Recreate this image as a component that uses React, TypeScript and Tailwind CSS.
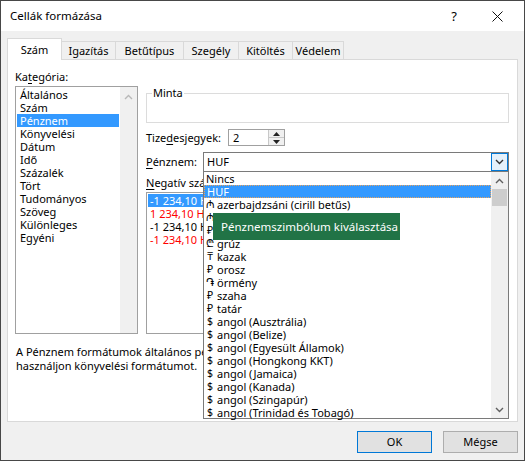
import type { ReactNode } from 'react'

const categories = [
  'Általános',
  'Szám',
  'Pénznem',
  'Könyvelési',
  'Dátum',
  'Idő',
  'Százalék',
  'Tört',
  'Tudományos',
  'Szöveg',
  'Különleges',
  'Egyéni',
]

const currencies: [string, string][] = [
  ['', 'Nincs'],
  ['', 'HUF'],
  ['₼', 'azerbajdzsáni (cirill betűs)'],
  ['₼', 'azerbajdzsáni (latin betűs)'],
  ['₽', 'belarusz'],
  ['₾', 'grúz'],
  ['₸', 'kazak'],
  ['₽', 'orosz'],
  ['֏', 'örmény'],
  ['₽', 'szaha'],
  ['₽', 'tatár'],
  ['$', 'angol (Ausztrália)'],
  ['$', 'angol (Belize)'],
  ['$', 'angol (Egyesült Államok)'],
  ['$', 'angol (Hongkong KKT)'],
  ['$', 'angol (Jamaica)'],
  ['$', 'angol (Kanada)'],
  ['$', 'angol (Szingapúr)'],
  ['$', 'angol (Trinidad és Tobagó)'],
]

const negatives = [
  { text: '-1 234,10 HUF', red: false },
  { text: '1 234,10 HUF', red: true },
  { text: '-1 234,10 HUF', red: false },
  { text: '-1 234,10 HUF', red: true },
]

const tabs = [
  { label: 'Szám', w: 'w-[55px]' },
  { label: 'Igazítás', w: 'w-[54px]' },
  { label: 'Betűtípus', w: 'w-[68px]' },
  { label: 'Szegély', w: 'w-[55px]' },
  { label: 'Kitöltés', w: 'w-[54px]' },
  { label: 'Védelem', w: 'w-[51px]' },
]

function Chevron({ up, color = '#606060' }: { up?: boolean; color?: string }) {
  return (
    <svg width="9" height="6" viewBox="0 0 9 6">
      <polyline
        points={up ? '1,5 4.5,1.5 8,5' : '1,1 4.5,4.5 8,1'}
        fill="none"
        stroke={color}
        strokeWidth="1.4"
      />
    </svg>
  )
}

// label with the access key underlined
function Label({ before, key_, after }: { before: string; key_: string; after: string }) {
  return (
    <span className="whitespace-nowrap">
      {before}
      <u className="underline-offset-2">{key_}</u>
      {after}
    </span>
  )
}

function Tooltip({ children }: { children: ReactNode }) {
  return (
    <div className="absolute left-[205px] top-[153px] z-30 flex h-[27px] w-[187px] items-center whitespace-nowrap bg-[#217346] pl-[8px] text-[11.5px] text-white">
      {children}
    </div>
  )
}

export default function App() {
  return (
    <div className="flex h-[461px] w-[525px] flex-col border border-[#474747] bg-[#f0f0f0] font-['Noto_Sans','DejaVu_Sans',sans-serif] text-[11px] leading-[16px] text-black">
      {/* title bar */}
      <div className="flex h-[30px] items-center justify-between bg-white pl-[9px] pr-[21px]">
        <span className="text-[11.5px]">Cellák formázása</span>
        <div className="flex items-center gap-[35px]">
          <span className="text-[13px]">?</span>
          <svg width="11" height="11" viewBox="0 0 11 11">
            <path d="M0.5 0.5 L10.5 10.5 M10.5 0.5 L0.5 10.5" stroke="#111" strokeWidth="1" />
          </svg>
        </div>
      </div>

      {/* tabs */}
      <div className="mt-[7px] flex items-end px-[6px]">
        {tabs.map((t, i) =>
          i === 0 ? (
            <div
              key={t.label}
              className={`relative z-10 -mb-px flex h-[22px] items-center justify-center border border-b-0 border-[#d9d9d9] bg-white ${t.w}`}
            >
              {t.label}
            </div>
          ) : (
            <div
              key={t.label}
              className={`flex h-[18px] items-center justify-center border-t border-r border-[#d9d9d9] bg-[#f0f0f0] ${t.w}`}
            >
              {t.label}
            </div>
          ),
        )}
      </div>

      {/* tab page */}
      <div className="relative mx-[6px] h-[363px] overflow-hidden border border-[#d9d9d9] bg-white">
        <div className="flex gap-[8px] px-[7px]">
          {/* category list */}
          <div className="flex w-[123px] flex-col pt-[9px]">
            <Label before="Ka" key_="t" after="egória:" />
            <div className="mt-px flex h-[248px] border border-[#a0a0a0]">
              <div className="flex flex-1 flex-col p-px">
                {categories.map((c, i) => (
                  <div
                    key={c}
                    className={`h-[13px] pl-[3px] leading-[13px] ${i === 2 ? 'bg-[#3399ff] text-white' : ''}`}
                  >
                    {c}
                  </div>
                ))}
              </div>
              <div className="flex w-[17px] flex-col items-center bg-[#f0f0f0] pt-[7px]">
                <Chevron up color="#b8b8b8" />
              </div>
            </div>
          </div>

          {/* right side */}
          <div className="flex w-[363px] flex-col pt-[25px]">
            <fieldset className="h-[38px] border border-[#dcdcdc]">
              <legend className="ml-[5px] px-px">Minta</legend>
            </fieldset>

            <div className="mt-[6px] flex h-[17px] items-center">
              <span className="w-[82px]">
                <Label before="Tize" key_="d" after="esjegyek:" />
              </span>
              <div className="flex h-[17px] w-[57px] border border-[#a0a0a0]">
                <span className="flex-1 pl-[4px] leading-[15px]">2</span>
                <div className="flex w-[16px] flex-col border-l border-[#c8c8c8]">
                  <div className="flex flex-1 items-center justify-center border-b border-[#c8c8c8] bg-[#f0f0f0]">
                    <svg width="7" height="4" viewBox="0 0 7 4">
                      <polygon points="0,4 3.5,0 7,4" fill="#222" />
                    </svg>
                  </div>
                  <div className="flex flex-1 items-center justify-center bg-[#f0f0f0]">
                    <svg width="7" height="4" viewBox="0 0 7 4">
                      <polygon points="0,0 3.5,4 7,0" fill="#222" />
                    </svg>
                  </div>
                </div>
              </div>
            </div>

            <div className="mt-[6px] flex h-[20px] items-center">
              <span className="w-[57px]">
                <Label before="" key_="P" after="énznem:" />
              </span>
              <div className="flex h-[20px] w-[306px] border border-[#7a7a7a] bg-white">
                <span className="flex-1 pl-[3px] leading-[18px]">HUF</span>
                <div className="flex w-[17px] items-center justify-center border border-[#0078d7] bg-[#e5f1fb]">
                  <Chevron color="#333" />
                </div>
              </div>
            </div>

            <div className="mt-[3px] h-[17px]">
              <Label before="" key_="N" after="egatív számok:" />
            </div>
            <div className="h-[142px] w-[120px] border border-[#a0a0a0] p-px">
              {negatives.map((n, i) => (
                <div
                  key={i}
                  className={`h-[13px] whitespace-nowrap pl-[2px] leading-[13px] ${
                    i === 0 ? 'bg-[#3399ff] text-white' : n.red ? 'text-[#ff0000]' : ''
                  }`}
                >
                  {n.text}
                </div>
              ))}
            </div>
          </div>
        </div>

        <div className="mt-[11px] pl-[8px] leading-[14px]">
          <div className="whitespace-nowrap">
            A Pénznem formátumok általános pénzértékek megjelenítésére szolgálnak.
          </div>
          <div className="whitespace-nowrap">használjon könyvelési formátumot.</div>
        </div>

        {/* open currency dropdown */}
        <div className="absolute left-[195px] top-[111px] z-20 flex h-[248px] w-[306px] border border-[#7a7a7a] bg-white">
          <div className="flex flex-1 flex-col">
            {currencies.map(([sym, name], i) => (
              <div
                key={i}
                className={`flex h-[13px] items-center gap-[3px] whitespace-nowrap pl-[2px] leading-[13px] ${
                  i === 1 ? 'border border-dotted border-[#e8a25c] bg-[#3399ff] text-white' : ''
                }`}
              >
                {sym && <span className="w-[8px] text-center text-[10.5px]">{sym}</span>}
                <span>{name}</span>
              </div>
            ))}
          </div>
          <div className="flex w-[17px] flex-col items-center bg-[#f0f0f0]">
            <div className="flex h-[17px] items-center">
              <Chevron up />
            </div>
            <div className="h-[17px] w-[15px] bg-[#cdcdcd]" />
            <div className="flex-1" />
            <div className="flex h-[17px] items-center">
              <Chevron />
            </div>
          </div>
        </div>

        <Tooltip>Pénznemszimbólum kiválasztása</Tooltip>
      </div>

      {/* dialog buttons */}
      <div className="mx-[6px] mt-[9px] flex justify-end gap-[11px]">
        <button className="h-[22px] w-[75px] border border-[#0078d7] bg-[#e1e1e1]">OK</button>
        <button className="h-[22px] w-[75px] border border-[#adadad] bg-[#e1e1e1]">Mégse</button>
      </div>
    </div>
  )
}
